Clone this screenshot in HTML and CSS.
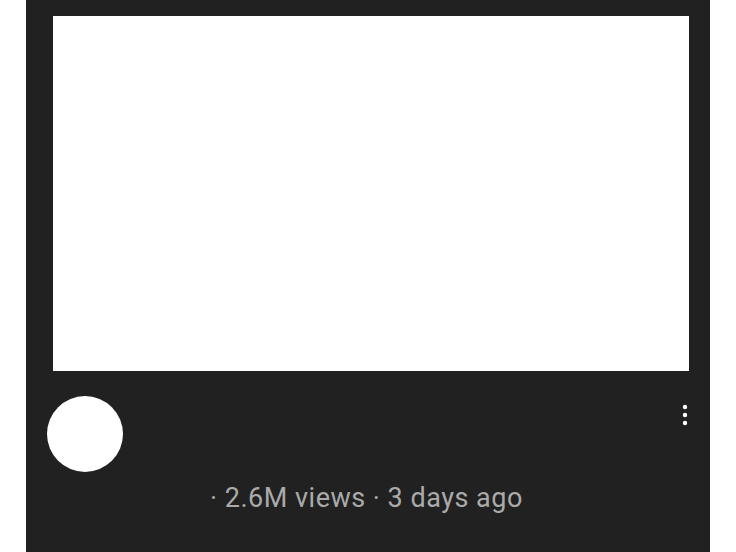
FILE: index.html
```html
<!DOCTYPE html>
<html>
<head>
<meta charset="utf-8">
<link rel="stylesheet" href="styles.css">
</head>
<body>
<div class="page">
  <div class="card">
    <div class="thumb"></div>
    <div class="details">
      <div class="avatar"></div>
      <div class="info">
        <div class="meta">· 2.6M views · 3 days ago</div>
      </div>
      <div class="menu">
        <svg width="6" height="22" viewBox="0 0 6 22"><circle cx="3" cy="3" r="2.2" fill="#fff"/><circle cx="3" cy="11" r="2.2" fill="#fff"/><circle cx="3" cy="19" r="2.2" fill="#fff"/></svg>
      </div>
    </div>
  </div>
</div>
</body>
</html>
```
FILE: styles.css
```css
html, body { margin: 0; padding: 0; background: #fff; }
body { font-family: Roboto, "Noto Sans", sans-serif; }
.page { width: 736px; height: 552px; overflow: hidden; padding-left: 26px; box-sizing: border-box; }
.card {
  width: 684px; height: 552px; background: #212121;
  box-sizing: border-box; padding: 16px 21px 0 27px;
}
.thumb { width: 636px; height: 355px; background: #fff; }
.details { display: flex; position: relative; padding-top: 25px; margin-left: -6px; }
.avatar { width: 76px; height: 76px; border-radius: 50%; background: #fff; flex: none; }
.info { flex: 1; padding-left: 87px; padding-top: 86px; }
.meta { color: #aaa; font-size: 27px; letter-spacing: 0.5px; line-height: 32px; }
.menu { position: absolute; right: 1px; top: 33px; }
.menu svg { display: block; }
```
